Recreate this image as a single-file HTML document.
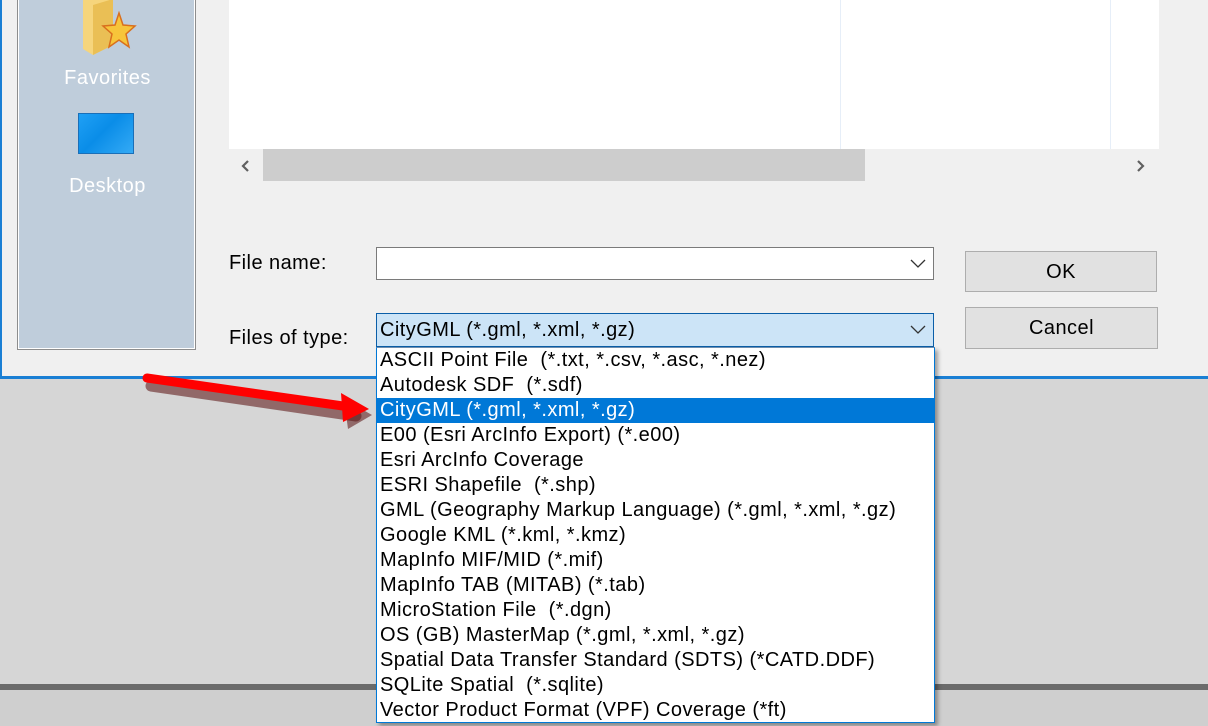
<!DOCTYPE html>
<html><head><meta charset="utf-8"><style>
*{margin:0;padding:0;box-sizing:border-box}
body{width:1208px;height:726px;overflow:hidden;background:#d6d6d6;font-family:"Liberation Sans",Arial,sans-serif;position:relative}
.abs{position:absolute}
#dlg{left:0;top:0;width:1208px;height:379px;background:#f0f0f0;border-left:2px solid #1a7fd4;border-bottom:3px solid #1a7fd4}
#side{left:15px;top:-2px;width:179px;height:352px;background:#bfcddb;border:1px solid #8d8d8d;box-shadow:inset 0 0 0 1px #fff}
.sl{color:#fff;font-size:20px;letter-spacing:.5px;width:179px;text-align:center}
#pane{left:229px;top:0;width:930px;height:149px;background:#fff}
.lbl{font-size:20px;letter-spacing:.45px;color:#000}
.btn{background:#e1e1e1;border:1px solid #adadad;font-size:20px;letter-spacing:.45px;text-align:center}
#list{left:376px;top:347px;width:559px;height:376px;background:#fff;border:1px solid #0078d7;border-top:1px solid #6f8fb0;box-shadow:3px 3px 4px rgba(0,0,0,.35)}
#list div{height:25px;line-height:25px;padding-left:3px;font-size:20px;white-space:pre;letter-spacing:.45px}
#list .sel{background:#0078d7;color:#fff}
</style></head><body>
<div class="abs" style="left:0;top:684px;width:1208px;height:6px;background:#6b6b6b"></div>
<div class="abs" style="left:0;top:690px;width:1208px;height:36px;background:#cfcfcf"></div>
<div id="dlg" class="abs">
 <div id="side" class="abs">
  <svg class="abs" style="left:65px;top:0" width="54" height="58" viewBox="0 0 54 58">
   <path d="M0 0 L30 0 L30 46 L10 56 L0 50Z" fill="#f6d57c"/>
   <path d="M10 6 L30 0 L30 46 L10 56Z" fill="#eabf55"/>
   <path d="M36 14 L40 26 L52 27 L43 35 L46 48 L36 41 L26 48 L29 35 L20 27 L32 26Z" fill="#f7c53a" stroke="#d96f1d" stroke-width="1.5"/>
  </svg>
  <div class="abs sl" style="top:68px">Favorites</div>
  <div class="abs" style="left:60px;top:114px;width:56px;height:41px;background:linear-gradient(135deg,#1fa0f5 0%,#0a8de8 45%,#34aaf5 100%);border:1px solid #1a6fb8"></div>
  <div class="abs sl" style="top:176px">Desktop</div>
 </div>
</div>
<div id="pane" class="abs">
 <div class="abs" style="left:611px;top:0;width:1px;height:149px;background:#e6eef8"></div>
 <div class="abs" style="left:881px;top:0;width:1px;height:149px;background:#e6eef8"></div>
</div>
<div class="abs" style="left:263px;top:149px;width:602px;height:32px;background:#cdcdcd"></div>
<svg class="abs" style="left:240px;top:159px" width="10" height="14"><path d="M8 2 L3 7 L8 12" fill="none" stroke="#606060" stroke-width="2.2"/></svg>
<svg class="abs" style="left:1136px;top:159px" width="10" height="14"><path d="M2 2 L7 7 L2 12" fill="none" stroke="#606060" stroke-width="2.2"/></svg>
<div class="abs lbl" style="left:229px;top:252px">File name:</div>
<div class="abs lbl" style="left:229px;top:327px">Files of type:</div>
<div class="abs" style="left:376px;top:247px;width:558px;height:33px;background:#fff;border:1px solid #7a7a7a"></div>
<svg class="abs" style="left:910px;top:259px" width="16" height="10"><path d="M1 1 L8 8 L15 1" fill="none" stroke="#333" stroke-width="1.3"/></svg>
<div class="abs" style="left:376px;top:313px;width:558px;height:34px;background:#cce4f7;border:1px solid #0a5ea8"></div>
<div class="abs lbl" style="left:380px;top:319px">CityGML (*.gml, *.xml, *.gz)</div>
<svg class="abs" style="left:910px;top:325px" width="16" height="10"><path d="M1 1 L8 8 L15 1" fill="none" stroke="#333" stroke-width="1.3"/></svg>
<div class="abs btn" style="left:965px;top:251px;width:192px;height:41px;line-height:40px">OK</div>
<div class="abs btn" style="left:965px;top:307px;width:193px;height:42px;line-height:41px">Cancel</div>
<div id="list" class="abs">
<div>ASCII Point File  (*.txt, *.csv, *.asc, *.nez)</div>
<div>Autodesk SDF  (*.sdf)</div>
<div class="sel">CityGML (*.gml, *.xml, *.gz)</div>
<div>E00 (Esri ArcInfo Export) (*.e00)</div>
<div>Esri ArcInfo Coverage</div>
<div>ESRI Shapefile  (*.shp)</div>
<div>GML (Geography Markup Language) (*.gml, *.xml, *.gz)</div>
<div>Google KML (*.kml, *.kmz)</div>
<div>MapInfo MIF/MID (*.mif)</div>
<div>MapInfo TAB (MITAB) (*.tab)</div>
<div>MicroStation File  (*.dgn)</div>
<div>OS (GB) MasterMap (*.gml, *.xml, *.gz)</div>
<div>Spatial Data Transfer Standard (SDTS) (*CATD.DDF)</div>
<div>SQLite Spatial  (*.sqlite)</div>
<div>Vector Product Format (VPF) Coverage (*ft)</div>
</div>
<svg class="abs" style="left:135px;top:365px" width="245" height="65">
 <path d="M15 17 L220 47" stroke="#5a1010" stroke-width="11" stroke-linecap="round" opacity=".55" transform="translate(1,4)"/>
 <path d="M208 31 L236 47 L212 61Z" fill="#5a1010" opacity=".55" transform="translate(1,3)"/>
 <path d="M12 13 L215 42" stroke="#f00" stroke-width="9" stroke-linecap="round"/>
 <path d="M206 28 L234 44 L208 57Z" fill="#f00"/>
</svg>
</body></html>
